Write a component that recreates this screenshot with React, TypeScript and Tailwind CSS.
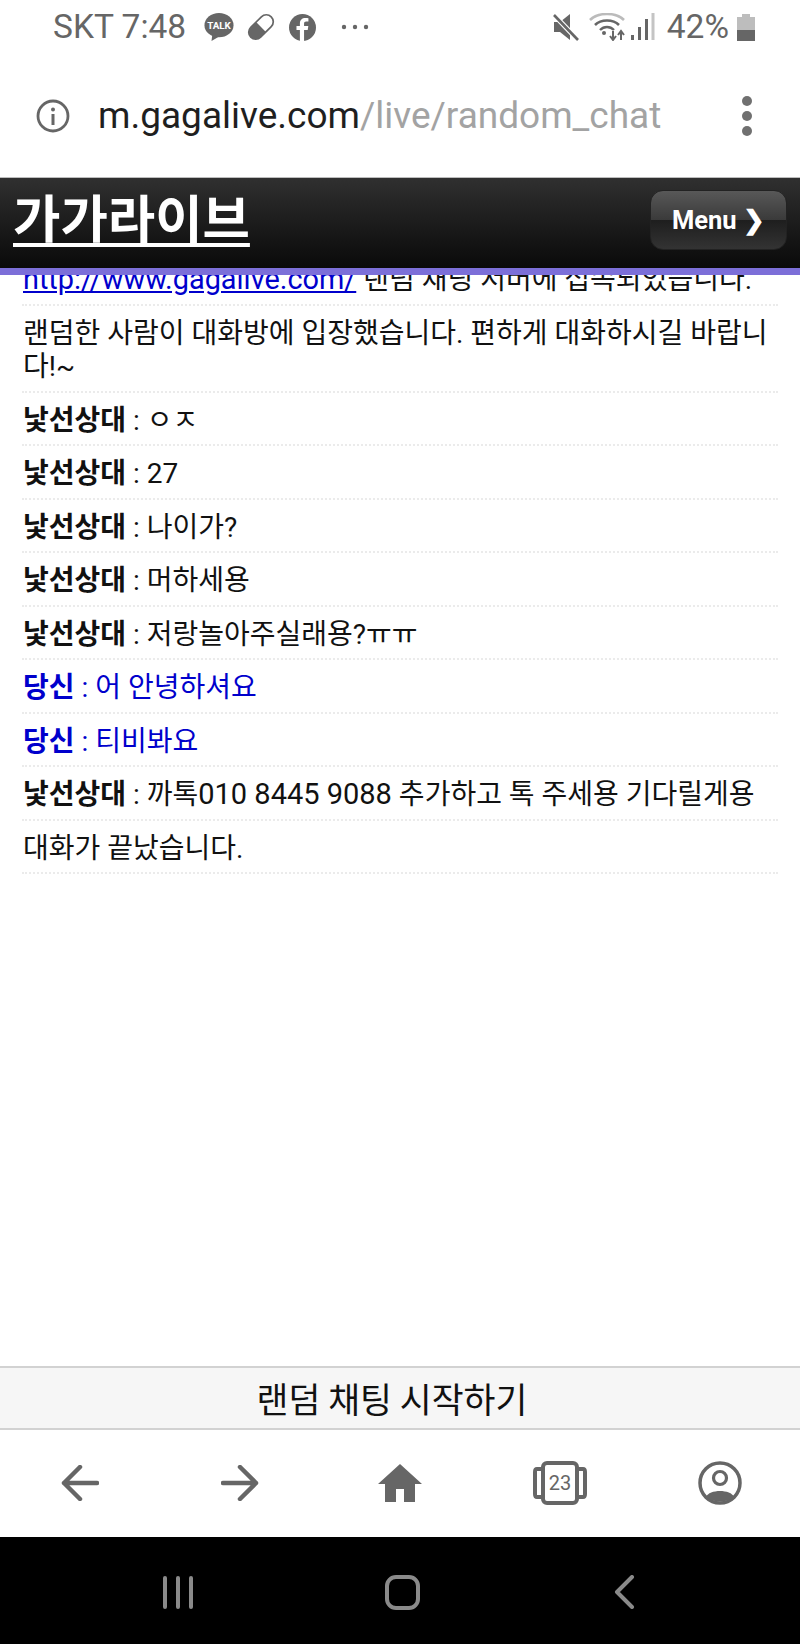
import React from "react";

const rows: { who?: string; text: React.ReactNode; mine?: boolean }[] = [
  { who: "낯선상대", text: "ㅇㅈ" },
  { who: "낯선상대", text: "27" },
  { who: "낯선상대", text: "나이가?" },
  { who: "낯선상대", text: "머하세용" },
  { who: "낯선상대", text: "저랑놀아주실래용?ㅠㅠ" },
  { who: "당신", text: "어 안녕하셔요", mine: true },
  { who: "당신", text: "티비봐요", mine: true },
  {
    who: "낯선상대",
    text: (
      <>
        까톡<span className="text-[29px]">010 8445 9088</span> 추가하고 톡 주세용 기다릴게용
      </>
    ),
  },
  { text: "대화가 끝났습니다." },
];

const G = "#666666";

function StatusBar() {
  return (
    <div className="h-[56px] bg-white flex items-center text-[#666666] text-[33.5px] font-['Roboto','Noto_Sans_CJK_KR',sans-serif] pb-[2px]">
      <span className="ml-[53px] w-[151px] leading-none whitespace-nowrap">SKT 7:48</span>
      <svg width="30" height="30" viewBox="0 0 32 30">
        <ellipse cx="16" cy="13" rx="15.5" ry="13" fill={G} />
        <path d="M9 22 L8 30 L18 24 Z" fill={G} />
        <text x="16" y="17" fontSize="10.5" fontWeight="700" fill="#fff" textAnchor="middle" fontFamily="Roboto">TALK</text>
      </svg>
      <svg width="30" height="30" viewBox="0 0 28 28" className="ml-[12px]">
        <g transform="rotate(-45 14 14)">
          <rect x="0.5" y="7.5" width="27" height="13" rx="6.5" fill="#fff" stroke={G} strokeWidth="1.6" />
          <path d="M7 7.5 H14 V20.5 H7 A6.5 6.5 0 0 1 7 7.5 Z" fill={G} />
        </g>
      </svg>
      <svg width="27" height="27" viewBox="0 0 26 26" className="ml-[13px]">
        <circle cx="13" cy="13" r="13" fill={G} />
        <path d="M14.5 26 V15.5 H18 L18.6 11.5 H14.5 V9.3 C14.5 8 15.2 7.3 16.5 7.3 H18.7 V4 C17.9 3.9 16.8 3.8 15.8 3.8 C12.6 3.8 10.5 5.7 10.5 9 V11.5 H7.2 V15.5 H10.5 V26 Z" fill="#fff" />
      </svg>
      <svg width="28" height="6" viewBox="0 0 28 6" className="ml-[25px]">
        <circle cx="3" cy="3" r="2.2" fill={G} />
        <circle cx="14" cy="3" r="2.2" fill={G} />
        <circle cx="25" cy="3" r="2.2" fill={G} />
      </svg>
      <svg width="26" height="28" viewBox="0 0 26 28" className="ml-auto">
        <path d="M1 9 H7 L17 1 V27 L7 19 H1 Z" fill={G} />
        <path d="M1 2 L25 27" stroke="#fff" strokeWidth="5" />
        <path d="M1 2 L25 27" stroke={G} strokeWidth="2.6" />
      </svg>
      <svg width="66" height="28" viewBox="0 0 66 28" className="ml-[10px]">
        <path d="M1 7 C9 -1 27 -1 35 7" fill="none" stroke="#bbbbbb" strokeWidth="2.6" />
        <path d="M6 12 C12 6 24 6 30 12" fill="none" stroke={G} strokeWidth="2.6" />
        <path d="M11 17 C15 13 21 13 25 17" fill="none" stroke={G} strokeWidth="2.4" />
        <circle cx="15" cy="20" r="2" fill={G} />
        <path d="M24 18 V26 M21 23 L24 27 L27 23" fill="none" stroke={G} strokeWidth="2" />
        <path d="M32 27 V19 M29 22 L32 18 L35 22" fill="none" stroke={G} strokeWidth="2" />
        <rect x="42" y="22" width="3" height="5" fill={G} />
        <rect x="49" y="14" width="3" height="13" fill={G} />
        <rect x="56" y="6" width="3" height="21" fill={G} />
        <rect x="62.5" y="0" width="3" height="27" fill="#c4c4c4" />
      </svg>
      <span className="ml-[12px] leading-none">42%</span>
      <svg width="18" height="27" viewBox="0 0 18 27" className="ml-[8px] mr-[45px]">
        <path d="M5 0 H13 V3 H18 V27 H0 V3 H5 Z" fill="#bdbdbd" />
        <rect x="0" y="16" width="18" height="11" fill={G} />
      </svg>
    </div>
  );
}

function UrlBar() {
  return (
    <div className="h-[121px] bg-white flex items-center font-['Roboto','Liberation_Sans',sans-serif] pb-[2px]">
      <svg width="34" height="34" viewBox="0 0 34 34" className="ml-[36px]">
        <circle cx="17" cy="17" r="15" fill="none" stroke={G} strokeWidth="2.8" />
        <circle cx="17" cy="10.5" r="2" fill={G} />
        <rect x="15.5" y="15" width="3" height="11" fill={G} />
      </svg>
      <span className="ml-[28px] text-[37px] leading-none whitespace-nowrap">
        <span className="text-[#1f1f1f]">m.gagalive.com</span>
        <span className="text-[#a3a3a3]">/live/random_chat</span>
      </span>
      <div className="ml-auto mr-[48px] flex flex-col gap-[5px]">
        <div className="w-[10px] h-[10px] rounded-full bg-[#707070]" />
        <div className="w-[10px] h-[10px] rounded-full bg-[#707070]" />
        <div className="w-[10px] h-[10px] rounded-full bg-[#707070]" />
      </div>
    </div>
  );
}

function Header() {
  return (
    <div className="relative z-10 h-[98px] shrink-0 flex items-start justify-between border-t border-[#bdbdbd] border-b-[7px] border-b-[#7c6fd8] bg-gradient-to-b from-[#303030] to-[#0a0a0a] font-['Noto_Sans_CJK_KR','Roboto',sans-serif]">
      <a className="ml-[13px] mt-[6px] text-[51.5px] leading-[64px] font-bold text-white underline decoration-[4px] underline-offset-[5px] whitespace-nowrap">
        가가라이브
      </a>
      <div className="mr-[13px] mt-[12px] w-[137px] h-[60px] rounded-[13px] border border-[#222222] bg-[linear-gradient(to_bottom,#585858_0%,#3a3a3a_50%,#1e1e1e_50%,#333333_100%)] flex items-center justify-center pt-[1px] text-white text-[25.5px] font-bold font-['Roboto',sans-serif] whitespace-nowrap">
        Menu ❯
      </div>
    </div>
  );
}

function Row({ children, cls = "" }: { children: React.ReactNode; cls?: string }) {
  return (
    <div className={`border-b-2 border-dotted border-[#ebebeb] mx-[22px] px-[1px] pt-[11px] pb-[7px] leading-[33.5px] ${cls}`}>
      {children}
    </div>
  );
}

function Chat() {
  return (
    <div className="flex-1 overflow-hidden bg-white text-[28px] text-[#111111] font-['Roboto','Noto_Sans_CJK_KR',sans-serif]">
      <div className="-mt-[23px]">
        <Row>
          <span className="text-[#0000cc] underline text-[28.9px]">http://www.gagalive.com/</span> 랜덤 채팅 서버에 접속되었습니다.
        </Row>
        <Row>랜덤한 사람이 대화방에 입장했습니다. 편하게 대화하시길 바랍니다!~</Row>
        {rows.map((r, i) => (
          <Row key={i} cls={r.mine ? "text-[#0000cc]" : ""}>
            {r.who && <b className="font-bold">{r.who}</b>}
            {r.who ? " : " : ""}
            {r.text}
          </Row>
        ))}
      </div>
    </div>
  );
}

function BrowserNav() {
  return (
    <div className="h-[107px] bg-white flex items-center justify-around px-0 pb-[2px] shrink-0">
      <div className="w-[160px] flex justify-center">
        <svg width="38" height="36" viewBox="0 0 38 36"><path d="M36 18 H3 M19 2 L3 18 L19 34" fill="none" stroke={G} strokeWidth="4.5" strokeLinecap="round" strokeLinejoin="round" /></svg>
      </div>
      <div className="w-[160px] flex justify-center">
        <svg width="38" height="36" viewBox="0 0 38 36"><path d="M2 18 H35 M19 2 L35 18 L19 34" fill="none" stroke={G} strokeWidth="4.5" strokeLinecap="round" strokeLinejoin="round" /></svg>
      </div>
      <div className="w-[160px] flex justify-center">
        <svg width="44" height="38" viewBox="0 0 44 38"><path d="M22 0 L44 20 H37 V38 H26 V25 H18 V38 H7 V20 H0 Z" fill={G} /></svg>
      </div>
      <div className="w-[160px] flex justify-center">
        <div className="relative w-[54px] h-[44px] flex items-center justify-center">
          <svg width="54" height="44" viewBox="0 0 54 44" className="absolute inset-0">
            <rect x="10" y="2" width="34" height="40" rx="4" fill="none" stroke={G} strokeWidth="4" />
            <path d="M8 8 H4 Q2 8 2 11 V33 Q2 36 4 36 H8 M46 8 H50 Q52 8 52 11 V33 Q52 36 50 36 H46" fill="none" stroke={G} strokeWidth="4" />
          </svg>
          <span className="relative text-[20px] text-[#666666] leading-none font-['Roboto',sans-serif]">23</span>
        </div>
      </div>
      <div className="w-[160px] flex justify-center">
        <svg width="44" height="44" viewBox="0 0 44 44">
          <circle cx="22" cy="22" r="20" fill="none" stroke={G} strokeWidth="3.5" />
          <circle cx="22" cy="17" r="6.5" fill="none" stroke={G} strokeWidth="3.2" />
          <path d="M8 36 C11 28 33 28 36 36 C30 42 14 42 8 36 Z" fill={G} />
        </svg>
      </div>
    </div>
  );
}

function SystemNav() {
  return (
    <div className="h-[107px] bg-black shrink-0 flex items-center pt-[3px]">
      <div className="ml-[163px] flex gap-[9px]">
        <div className="w-[4px] h-[33px] rounded-full bg-[#8a8a8a]" />
        <div className="w-[4px] h-[33px] rounded-full bg-[#8a8a8a]" />
        <div className="w-[4px] h-[33px] rounded-full bg-[#8a8a8a]" />
      </div>
      <div className="ml-[192px] w-[35px] h-[35px] rounded-[11px] border-[4px] border-[#8a8a8a]" />
      <svg width="22" height="34" viewBox="0 0 22 34" className="ml-[193px]">
        <path d="M19 2 L4 17 L19 32" fill="none" stroke="#8a8a8a" strokeWidth="4" strokeLinecap="round" strokeLinejoin="round" />
      </svg>
    </div>
  );
}

export default function App() {
  return (
    <div className="w-[800px] h-[1644px] flex flex-col overflow-hidden bg-white">
      <StatusBar />
      <UrlBar />
      <Header />
      <Chat />
      <div className="h-[64px] shrink-0 bg-[#f6f6f6] border-y-2 border-[#d2d2d2] flex items-center justify-center pr-[16px] text-[34.7px] text-[#111111] font-['Noto_Sans_CJK_KR',sans-serif]">
        랜덤 채팅 시작하기
      </div>
      <BrowserNav />
      <SystemNav />
    </div>
  );
}
